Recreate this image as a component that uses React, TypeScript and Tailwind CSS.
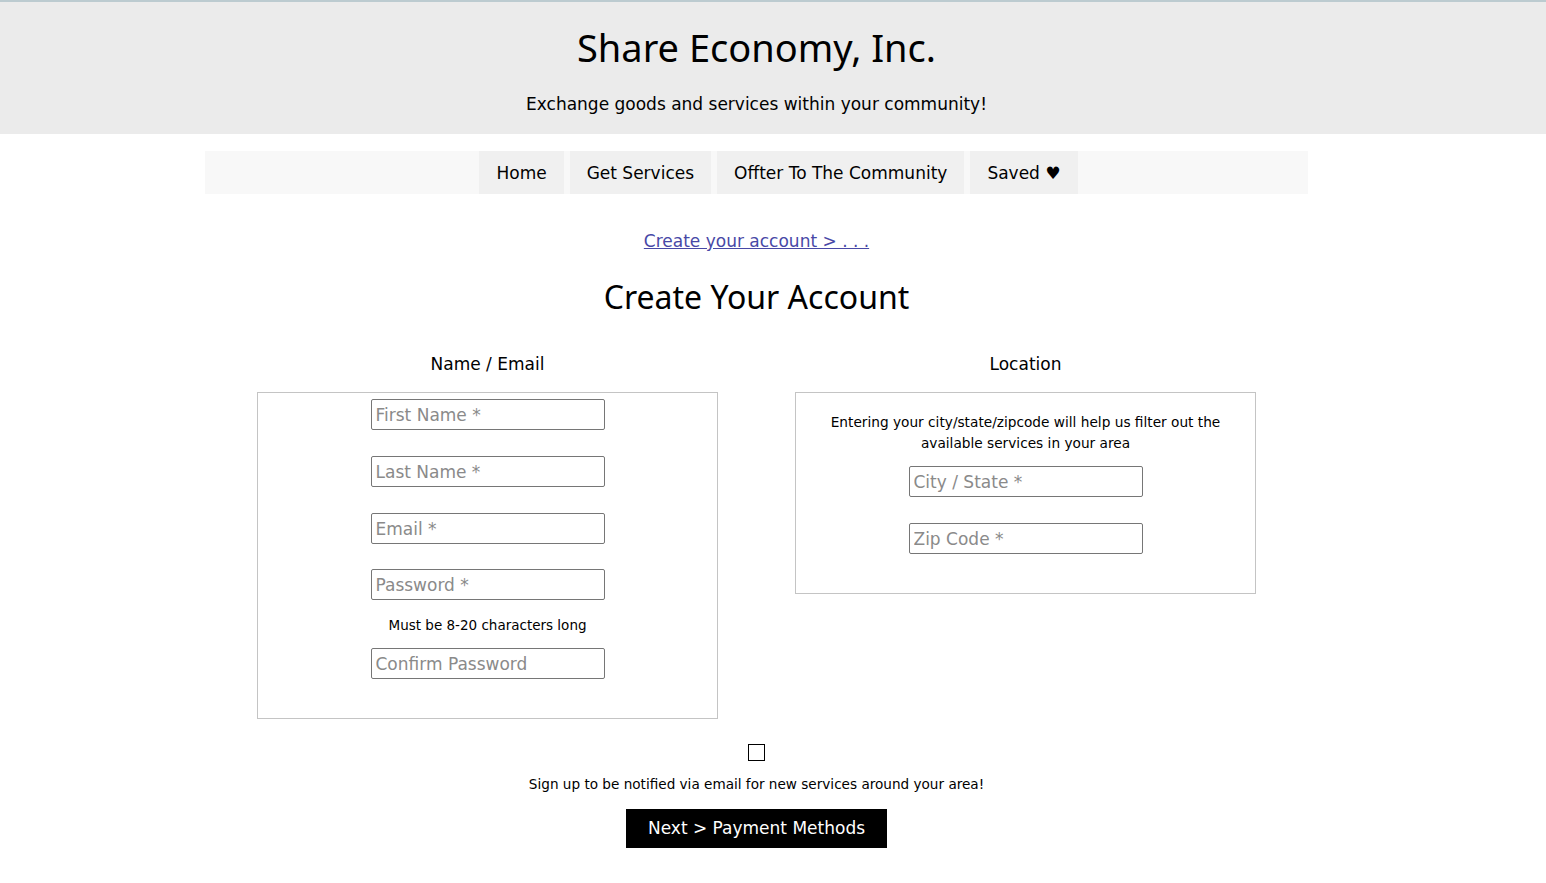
import React from 'react'

const navItems = ['Home', 'Get Services', 'Offter To The Community', 'Saved ♥']

function Field({ placeholder, type = 'text' }: { placeholder: string; type?: string }) {
  return (
    <input
      type={type}
      placeholder={placeholder}
      className="block w-[234px] h-[31px] border border-[#767676] rounded-[2px] bg-white px-[4px] text-[17px] text-black placeholder:text-[#8a8a8a] outline-none"
    />
  )
}

export default function App() {
  return (
    <div className="min-h-screen bg-white text-black font-['DejaVu_Sans',Verdana,sans-serif]">
      {/* Header */}
      <header className="h-[134px] border-t-2 border-[#bccbd0] bg-[#ebebeb]">
        <div className="w-[1513px] text-center">
          <h1 className="pt-[22px] text-[38px] leading-[46px] font-['Noto_Sans',sans-serif]">Share Economy, Inc.</h1>
          <p className="mt-[23px] text-[17px] leading-[22px]">Exchange goods and services within your community!</p>
        </div>
      </header>

      <main className="w-[1513px] flex flex-col items-center">
        {/* Nav */}
        <nav className="mt-[17px] w-[1103px] h-[43px] bg-[#f8f8f8] pl-[44px] flex justify-center gap-[6px]">
          {navItems.map((item) => (
            <a key={item} href="#" className="h-full flex items-center pt-[2px] px-[17px] bg-[#f0f0f0] text-[17px]">
              {item}
            </a>
          ))}
        </nav>

        <a href="#" className="mt-[36px] text-[17px] leading-[22px] text-[#4848a6] underline">
          Create your account &gt; . . .
        </a>

        <h2 className="mt-[25px] text-[32px] leading-[40px] font-['Noto_Sans',sans-serif]">Create Your Account</h2>

        {/* Columns */}
        <div className="mt-[35px] flex items-start">
          <section className="w-[538px] flex flex-col items-center">
            <h3 className="text-[17px] leading-[22px] pt-[1px]">Name / Email</h3>
            <div className="mt-[17px] w-[461px] border border-[#c4c4c4] pt-[6px] pb-[39px] flex flex-col items-center">
              <Field placeholder="First Name *" />
              <div className="mt-[26px]"><Field placeholder="Last Name *" /></div>
              <div className="mt-[26px]"><Field placeholder="Email *" /></div>
              <div className="mt-[25px]"><Field placeholder="Password *" type="password" /></div>
              <p className="mt-[16px] text-[13.5px] leading-[18px]">Must be 8-20 characters long</p>
              <div className="mt-[14px]"><Field placeholder="Confirm Password" type="password" /></div>
            </div>
          </section>

          <section className="w-[538px] flex flex-col items-center">
            <h3 className="text-[17px] leading-[22px] pt-[1px]">Location</h3>
            <div className="mt-[17px] w-[461px] border border-[#c4c4c4] px-[30px] pt-[19px] pb-[39px] flex flex-col items-center">
              <p className="text-[13.7px] leading-[21px] text-center">
                Entering your city/state/zipcode will help us filter out the available services in your area
              </p>
              <div className="mt-[12px]"><Field placeholder="City / State *" /></div>
              <div className="mt-[26px]"><Field placeholder="Zip Code *" /></div>
            </div>
          </section>
        </div>

        {/* Footer of form */}
        <input type="checkbox" className="mt-[25px] appearance-none w-[17px] h-[17px] border border-black bg-white" />
        <p className="mt-[14px] text-[13.6px] leading-[18px]">Sign up to be notified via email for new services around your area!</p>
        <button className="mt-[16px] w-[261px] h-[39px] bg-black text-white text-[17px]">Next &gt; Payment Methods</button>
      </main>
    </div>
  )
}
